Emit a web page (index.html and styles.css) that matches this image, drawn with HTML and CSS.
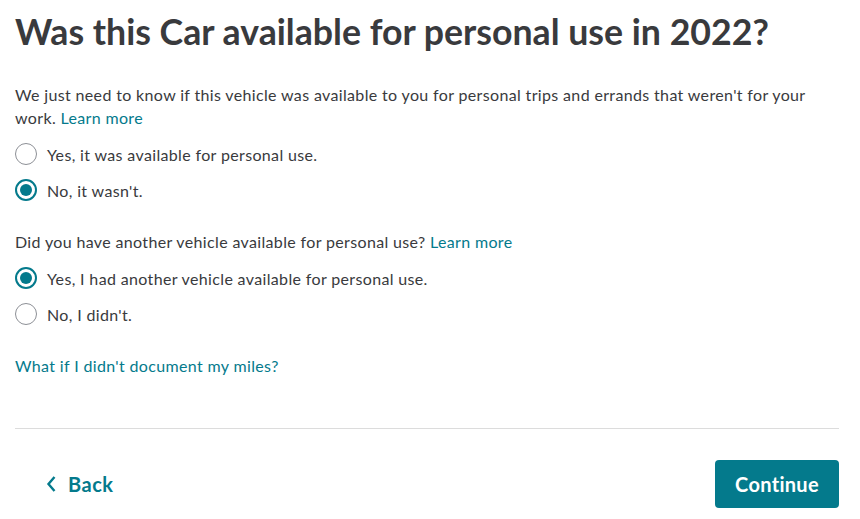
FILE: index.html
```html
<!DOCTYPE html>
<html>
<head>
<meta charset="utf-8">
<link rel="stylesheet" href="styles.css">
</head>
<body>
<div class="page">
  <h1 class="title">Was this Car available for personal use in 2022?</h1>
  <p class="intro">We just need to know if this vehicle was available to you for personal trips and errands that weren't for your work. <a class="link" href="#">Learn more</a></p>
  <div class="group">
    <label class="radio"><span class="dot"></span><span>Yes, it was available for personal use.</span></label>
    <label class="radio"><span class="dot on"></span><span>No, it wasn't.</span></label>
  </div>
  <p class="question">Did you have another vehicle available for personal use? <a class="link" href="#">Learn more</a></p>
  <div class="group">
    <label class="radio"><span class="dot on"></span><span>Yes, I had another vehicle available for personal use.</span></label>
    <label class="radio"><span class="dot"></span><span>No, I didn't.</span></label>
  </div>
  <a class="link miles" href="#">What if I didn't document my miles?</a>
  <div class="footer">
    <a class="back" href="#"><svg width="12" height="18" viewBox="0 0 12 18"><path d="M9.5 2 L3.5 9 L9.5 16" fill="none" stroke="#047a8c" stroke-width="2.4"/></svg><span>Back</span></a>
    <button class="continue">Continue</button>
  </div>
</div>
</body>
</html>
```
FILE: styles.css
```css
html, body { margin: 0; padding: 0; background: #fff; }
body { font-family: Lato, "Open Sans", sans-serif; color: #393a3d; }
.page { padding: 0 21px 0 15px; }
.title { font-size: 35.7px; font-weight: 700; margin: 0; padding-top: 12px; line-height: 40px; color: #393a3d; }
.intro { font-size: 16px; letter-spacing: 0.35px; line-height: 23px; margin: 31px 0 0; }
.link { color: #047a8c; text-decoration: none; }
.group { display: flex; flex-direction: column; gap: 14px; margin-top: 14px; }
.radio { display: flex; align-items: center; gap: 10px; font-size: 16px; letter-spacing: 0.35px; height: 22px; }
.dot { flex: none; width: 20px; height: 20px; border: 1px solid #8d9096; border-radius: 50%; box-sizing: content-box; display: inline-flex; align-items: center; justify-content: center; }
.dot.on { border: 2px solid #047a8c; width: 18px; height: 18px; }
.dot.on::after { content: ""; width: 12px; height: 12px; border-radius: 50%; background: #047a8c; }
.question { font-size: 16px; letter-spacing: 0.35px; line-height: 23px; margin: 29px 0 0; }
.miles { display: block; font-size: 16px; letter-spacing: 0.35px; line-height: 23px; margin-top: 29px; }
.footer { border-top: 1px solid #dcdcdc; margin-top: 51px; padding-top: 31px; display: flex; justify-content: space-between; align-items: center; }
.back { display: flex; align-items: center; gap: 11px; padding-left: 30px; color: #047a8c; text-decoration: none; font-size: 20px; font-weight: 700; letter-spacing: 0.5px; }
.continue { background: #047a8c; color: #fff; border: none; border-radius: 4px; width: 124px; height: 48px; font-family: inherit; font-size: 20px; font-weight: 700; letter-spacing: 0.3px; }
```
